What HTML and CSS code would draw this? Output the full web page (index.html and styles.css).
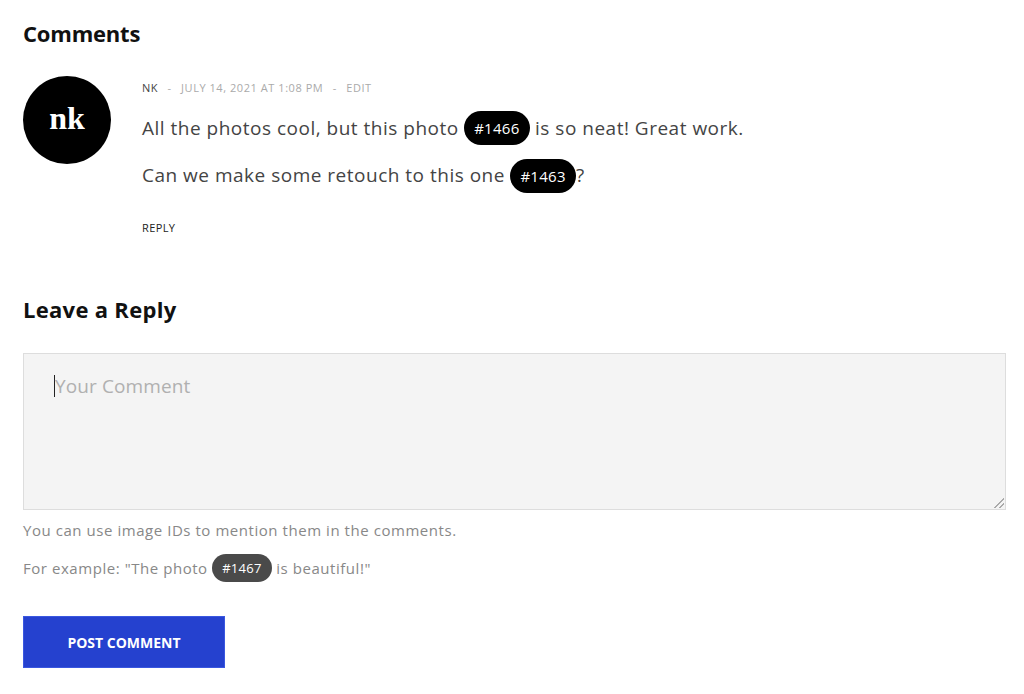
FILE: index.html
```html
<!DOCTYPE html>
<html lang="en">
<head>
  <meta charset="UTF-8">
  <title>Comments</title>
  <link rel="stylesheet" href="styles.css">
</head>
<body>

  <div class="page">
    <h2 class="title">Comments</h2>

    <div class="comment">
      <div class="avatar">nk</div>
      <div class="comment-body">
        <div class="meta">
          <span class="author">NK</span>
          <span class="sep">-</span>
          <span>July 14, 2021 at 1:08 pm</span>
          <span class="sep">-</span>
          <span>Edit</span>
        </div>
        <p class="text">All the photos cool, but this photo <span class="tag">#1466</span> is so neat! Great work.</p>
        <p class="text">Can we make some retouch to this one <span class="tag">#1463</span>?</p>
        <div class="reply">Reply</div>
      </div>
    </div>

    <h2 class="title reply-title">Leave a Reply</h2>

    <div class="field">
      <span class="caret"></span>
      <span class="placeholder">Your Comment</span>
      <span class="grip"></span>
    </div>

    <p class="hint">You can use image IDs to mention them in the comments.</p>
    <p class="hint">For example: "The photo <span class="tag tag-small">#1467</span> is beautiful!"</p>

    <button class="submit">Post Comment</button>
  </div>

</body>
</html>
```

FILE: styles.css
```css
body {
  margin: 0;
  font-family: "Open Sans", "Lato", sans-serif;
  color: #444;
  background: #fff;
}

.page {
  padding: 19px 18px 20px 23px;
}

.title {
  margin: 0;
  font-size: 22px;
  font-weight: 700;
  color: #111;
  line-height: 28px;
  letter-spacing: -0.2px;
}

.reply-title {
  margin-top: 60px;
  letter-spacing: 0.3px;
}

.comment {
  display: flex;
  gap: 31px;
  margin-top: 34px;
}

.avatar {
  width: 88px;
  height: 88px;
  flex: none;
  border-radius: 50%;
  background: #000;
  color: #fff;
  font-family: "Liberation Serif", "DejaVu Serif", serif;
  font-weight: 700;
  font-size: 32px;
  display: flex;
  align-items: center;
  justify-content: center;
  margin-top: -5px;
  padding-bottom: 4px;
  box-sizing: border-box;
}

.meta {
  font-size: 11px;
  text-transform: uppercase;
  color: #aaa;
  letter-spacing: 0.55px;
  line-height: 14px;
}

.meta .author {
  color: #444;
}

.meta .sep {
  margin: 0 6px;
}

.text {
  margin: 16px 0 0;
  font-size: 19px;
  letter-spacing: 0.5px;
  line-height: 34px;
  color: #444;
}

.text + .text {
  margin-top: 13px;
}

.tag {
  display: inline-block;
  background: #000;
  color: #fff;
  font-size: 15px;
  letter-spacing: 0.3px;
  line-height: 34px;
  padding: 0 10px;
  border-radius: 17px;
  vertical-align: middle;
  margin-top: -3px;
}

.reply {
  margin-top: 27px;
  font-size: 11px;
  text-transform: uppercase;
  color: #222;
  letter-spacing: 0.4px;
}

.field {
  position: relative;
  margin-top: 30px;
  height: 157px;
  background: #f4f4f4;
  border: 1px solid #ddd;
  padding: 20px 30px;
  box-sizing: border-box;
  display: flex;
  align-items: flex-start;
}

.caret {
  width: 1px;
  height: 22px;
  background: #222;
  margin-top: 1px;
}

.placeholder {
  font-size: 19px;
  letter-spacing: 0.1px;
  color: #b0b0b0;
  line-height: 24px;
}

.grip {
  position: absolute;
  right: 1px;
  bottom: 1px;
  width: 10px;
  height: 10px;
  background: linear-gradient(135deg, transparent 45%, #aaa 45%, #aaa 55%, transparent 55%, transparent 72%, #aaa 72%, #aaa 82%, transparent 82%);
}

.hint {
  margin: 9px 0 0;
  font-size: 15px;
  letter-spacing: 0.55px;
  color: #888;
  line-height: 22px;
}

.hint + .hint {
  margin-top: 16px;
}

.tag-small {
  background: #4a4a4a;
  font-size: 13px;
  line-height: 28px;
  padding: 0 10px;
  border-radius: 14px;
}

.submit {
  margin-top: 34px;
  width: 202px;
  height: 52px;
  border: 1px solid #3a57e0;
  background: #2541cf;
  color: #fff;
  font-family: inherit;
  font-size: 14px;
  font-weight: 700;
  text-transform: uppercase;
  cursor: pointer;
}
```
